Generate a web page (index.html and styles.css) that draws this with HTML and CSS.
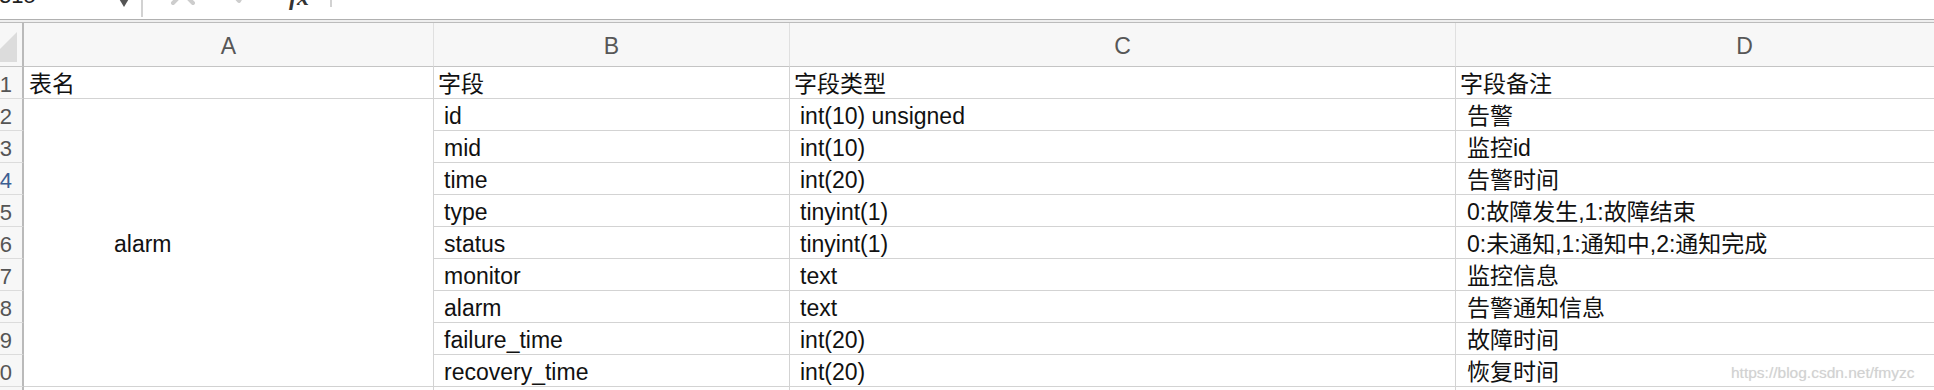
FILE: index.html
```html
<!DOCTYPE html>
<html lang="zh">
<head>
<meta charset="utf-8">
<title>alarm</title>
<link rel="stylesheet" href="styles.css">
</head>
<body>
<div class="app">
  <div class="fbar">
    <div class="namebox"><span class="nb-text">315</span><span class="nb-arrow"></span></div>
    <div class="fbtns">
      <svg class="ico-x" width="26" height="26" viewBox="0 0 26 26"><path d="M3 3 L23 23 M23 3 L3 23" stroke="#cdcdcd" stroke-width="4" stroke-linecap="round" fill="none"/></svg>
      <svg class="ico-ok" width="18" height="20" viewBox="0 0 18 20"><path d="M2 9 L8 16 L16 2" stroke="#cdcdcd" stroke-width="4" stroke-linecap="round" stroke-linejoin="round" fill="none"/></svg>
      <span class="fx">fx</span>
    </div>
    <div class="finput"></div>
  </div>
  <div class="fbar-gap"></div>
  <div class="sheet">
    <div class="corner"><svg width="22" height="43" viewBox="0 0 22 43"><polygon points="17,9 17,39 -13,39" fill="#dcdcdc"/></svg></div>
    <div class="c hd">A</div>
    <div class="c hd">B</div>
    <div class="c hd">C</div>
    <div class="c hd">D</div>

    <div class="c rn">1</div>
    <div class="c h1 ha">表名</div>
    <div class="c h1">字段</div>
    <div class="c h1">字段类型</div>
    <div class="c h1">字段备注</div>

    <div class="c rn">2</div>
    <div class="c merged">alarm</div>
    <div class="c b">id</div>
    <div class="c b">int(10) unsigned</div>
    <div class="c d">告警</div>

    <div class="c rn">3</div>
    <div class="c b">mid</div>
    <div class="c b">int(10)</div>
    <div class="c d">监控id</div>

    <div class="c rn sel">4</div>
    <div class="c b">time</div>
    <div class="c b">int(20)</div>
    <div class="c d">告警时间</div>

    <div class="c rn">5</div>
    <div class="c b">type</div>
    <div class="c b">tinyint(1)</div>
    <div class="c d">0:故障发生,1:故障结束</div>

    <div class="c rn">6</div>
    <div class="c b">status</div>
    <div class="c b">tinyint(1)</div>
    <div class="c d">0:未通知,1:通知中,2:通知完成</div>

    <div class="c rn">7</div>
    <div class="c b">monitor</div>
    <div class="c b">text</div>
    <div class="c d">监控信息</div>

    <div class="c rn">8</div>
    <div class="c b">alarm</div>
    <div class="c b">text</div>
    <div class="c d">告警通知信息</div>

    <div class="c rn">9</div>
    <div class="c b">failure_time</div>
    <div class="c b">int(20)</div>
    <div class="c d">故障时间</div>

    <div class="c rn">10</div>
    <div class="c b">recovery_time</div>
    <div class="c b">int(20)</div>
    <div class="c d">恢复时间</div>

    <div class="c rn">11</div>
    <div class="c"></div>
    <div class="c"></div>
    <div class="c"></div>
    <div class="c"></div>
  </div>
  <div class="watermark">https://blog.csdn.net/fmyzc</div>
</div>
</body>
</html>
```
FILE: styles.css
```css
html, body {
  margin: 0;
  padding: 0;
  background: #ffffff;
}

.app {
  position: relative;
  width: 1934px;
  height: 390px;
  overflow: hidden;
  background: #ffffff;
  font-family: "Liberation Sans", "Noto Sans CJK SC", sans-serif;
}

/* formula bar (mostly scrolled out of view) */
.fbar {
  display: flex;
  align-items: flex-start;
  height: 20px;
  box-sizing: border-box;
  border-bottom: 1px solid #b0b0b0;
  overflow: hidden;
}

.namebox {
  display: flex;
  justify-content: space-between;
  align-items: flex-start;
  width: 143px;
  height: 17px;
  box-sizing: border-box;
  border-right: 2px solid #d2d2d2;
  padding-right: 11px;
}

.nb-text {
  display: block;
  font-size: 22px;
  line-height: 22px;
  margin-top: -15px;
  margin-left: -1px;
  color: #222222;
}

.nb-arrow {
  display: block;
  width: 0;
  height: 0;
  margin-top: -3px;
  border-top: 10px solid #555555;
  border-left: 6px solid transparent;
  border-right: 6px solid transparent;
}

.fbtns {
  display: flex;
  align-items: flex-start;
  width: 189px;
  height: 7px;
  box-sizing: border-box;
  border-right: 2px solid #d2d2d2;
}

.ico-x {
  display: block;
  margin-left: 27px;
  margin-top: -20px;
  flex: none;
}

.ico-ok {
  display: block;
  margin-left: 35px;
  margin-top: -15px;
  flex: none;
}

.fx {
  display: block;
  margin-left: 40px;
  margin-top: -15px;
  font-family: "Liberation Serif", serif;
  font-style: italic;
  font-weight: bold;
  font-size: 24px;
  line-height: 24px;
  color: #333333;
}

.finput {
  flex: 1;
}

.fbar-gap {
  height: 2px;
  background: #efefef;
  border-bottom: 1px solid #bcbcbc;
}

/* sheet grid */
.sheet {
  display: grid;
  grid-template-columns: 24px 410px 356px 666px 578px;
  grid-template-rows: 44px;
  grid-auto-rows: 32px;
}

.c {
  box-sizing: border-box;
  border-right: 1px solid #d3d3d3;
  border-bottom: 1px solid #d3d3d3;
  padding: 4px 0 0 10px;
  font-size: 23px;
  line-height: 27px;
  color: #111111;
  white-space: nowrap;
  overflow: hidden;
}

.corner {
  box-sizing: border-box;
  background: #f7f7f7;
  border-right: 2px solid #bababa;
  border-bottom: 1px solid #c4c4c4;
  overflow: hidden;
}

.corner svg {
  display: block;
}

.hd {
  background: #f7f7f7;
  color: #575757;
  text-align: center;
  padding: 4px 0 0 0;
  line-height: 39px;
  border-right-color: #e0e0e0;
  border-bottom-color: #c4c4c4;
}

.rn {
  display: flex;
  justify-content: flex-end;
  background: #f7f7f7;
  border-right: 2px solid #bababa;
  border-bottom-color: #dcdcdc;
  padding: 4px 10px 0 0;
  font-size: 22px;
  color: #555555;
}

.rn.sel {
  color: #3d5f93;
}

.h1 {
  padding-left: 4px;
}

.ha {
  padding-left: 5px;
}

.b {
  padding-left: 10px;
}

.d {
  padding-left: 11px;
}

.merged {
  grid-row: span 9;
  display: flex;
  align-items: center;
  padding: 3px 0 0 90px;
}

.watermark {
  position: absolute;
  left: 1731px;
  top: 365px;
  font-family: "Liberation Sans", sans-serif;
  font-size: 15.5px;
  line-height: 15.5px;
  color: #d2d2d2;
  text-shadow: 0 0 1px #e6e6e6;
  white-space: nowrap;
}
```
